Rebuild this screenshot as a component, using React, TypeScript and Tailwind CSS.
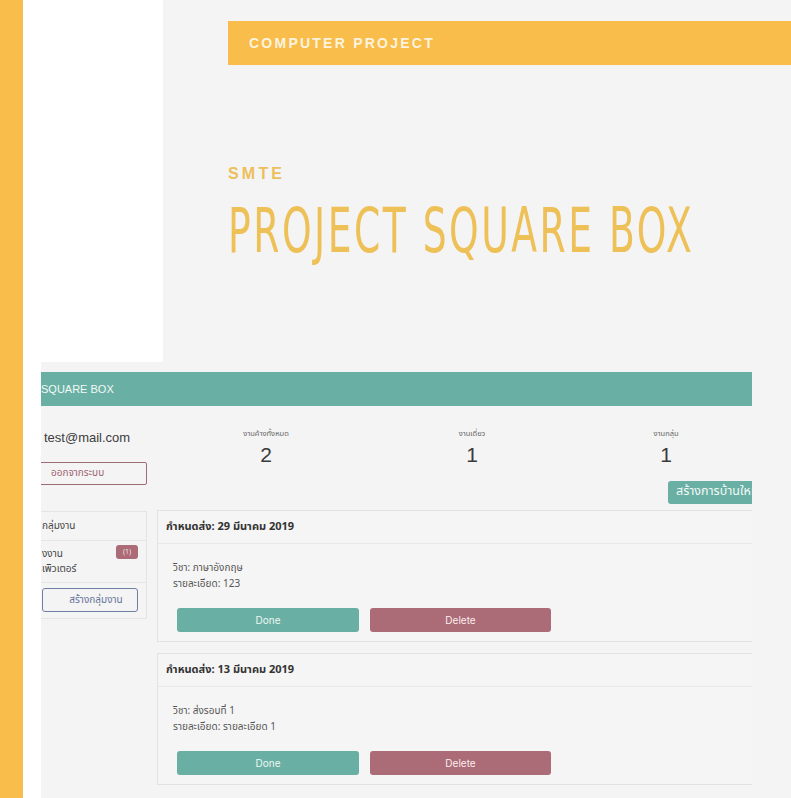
const thai = "font-['Noto_Sans_Thai','Noto_Sans','Liberation_Sans',sans-serif]";

function Card({ date, subject, detail }: { date: string; subject: string; detail: string }) {
  return (
    <div className="border border-[#e2e2e2] bg-[#f5f5f5]">
      <div className={`flex h-[33px] items-center border-b border-[#e8e8e8] pl-[8px] text-[11px] font-bold text-[#333] ${thai}`}>
        กำหนดส่ง: {date}
      </div>
      <div className="px-[15px] pt-[16px] pb-[9px]">
        <div className={`text-[10px] leading-[16px] text-[#555] ${thai}`}>
          <div>วิชา: {subject}</div>
          <div>รายละเอียด: {detail}</div>
        </div>
        <div className="mt-[16px] flex gap-[11px] pl-[4px]">
          <button className="h-[24px] w-[182px] rounded-[3px] bg-[#6aafa3] text-[10px] text-[#eef7f5] font-['Inter',sans-serif]">
            Done
          </button>
          <button className="h-[24px] w-[181px] rounded-[3px] bg-[#ab6b77] text-[10px] text-[#fbeef0] font-['Inter',sans-serif]">
            Delete
          </button>
        </div>
      </div>
    </div>
  );
}

function Stat({ label, value, w }: { label: string; value: string; w: string }) {
  return (
    <div className={`flex flex-col items-center ${w}`}>
      <div className={`text-[7.5px] leading-[10px] text-[#666] ${thai}`}>{label}</div>
      <div className="mt-[4px] text-[21px] leading-[24px] text-[#3a3a3a] font-['Liberation_Sans',sans-serif]">{value}</div>
    </div>
  );
}

export default function App() {
  return (
    <div className="flex h-[798px] w-[791px] overflow-hidden bg-white">
      <div className="w-[23px] shrink-0 bg-[#f8bd4b]" />
      <div className="flex min-w-0 flex-1 flex-col">
        <div className="flex h-[362px] shrink-0">
          <div className="w-[140px] shrink-0 bg-white" />
          <div className="flex-1 bg-[#f4f4f4] pt-[21px] pl-[65px]">
            <div className="flex h-[44px] items-center bg-[#f8bd4b] pl-[21px] text-[14px] font-bold tracking-[0.16em] text-[#fdf3df] font-['Liberation_Sans',sans-serif]">
              COMPUTER PROJECT
            </div>
            <div className="mt-[101px] text-[16px] font-bold leading-[16px] tracking-[0.2em] text-[#edbf5a] font-['Liberation_Sans',sans-serif]">
              SMTE
            </div>
            <div className="mt-[18px] origin-left scale-x-[0.675] whitespace-nowrap text-[62px] leading-[62px] tracking-[0.06em] text-[#eec058] font-['Liberation_Sans_Narrow','DejaVu_Sans_Condensed',sans-serif]">
              PROJECT SQUARE BOX
            </div>
          </div>
        </div>
        <div className="flex flex-1">
          <div className="w-[18px] shrink-0 bg-white" />
          <div className="flex min-w-0 flex-1 bg-[#f4f4f4] pt-[10px]">
            <div className="w-[711px] shrink-0 overflow-hidden">
              <div className="flex h-[34px] items-center bg-[#6aafa3] text-[11px] text-[#f2faf8] font-['Liberation_Sans',sans-serif]">
                <span>SQUARE BOX</span>
              </div>
              <div className="flex">
                <div className="w-[106px] shrink-0">
                  <div className="mt-[24px] pl-[3px] text-[13px] leading-[16px] text-[#3c3c3c] font-['Liberation_Sans',sans-serif]">
                    test@mail.com
                  </div>
                  <div className={`-ml-[12px] mt-[16px] flex h-[23px] items-center rounded-[2px] border border-[#9c6b74] pl-[21px] text-[10px] text-[#a0646f] ${thai}`}>
                    ออกจากระบบ
                  </div>
                  <div className="-ml-[12px] mt-[26px] border border-[#e4e4e4] pb-[6px]">
                    <div className={`flex h-[29px] items-center border-b border-[#e6e6e6] pl-[12px] text-[10px] text-[#444] ${thai}`}>
                      <span>กลุ่มงาน</span>
                    </div>
                    <div className={`flex h-[42px] items-start justify-between border-b border-[#e6e6e6] pt-[4px] pr-[8px] text-[10px] leading-[15px] text-[#444] ${thai}`}>
                      <div className="pl-[12px] pt-[2px]">
                        <div>งงาน</div>
                        <div>เพิวเตอร์</div>
                      </div>
                      <div className="flex h-[14px] w-[22px] items-center justify-center rounded-[3px] bg-[#ab6b77] text-[7px] text-[#f6e4e7]">
                        (1)
                      </div>
                    </div>
                    <div className={`ml-[12px] mr-[8px] mt-[5px] flex h-[24px] items-center justify-center rounded-[3px] border border-[#6f7fa3] pl-[12px] text-[10px] text-[#63739a] ${thai}`}>
                      สร้างกลุ่มงาน
                    </div>
                  </div>
                </div>
                <div className="ml-[10px] w-[612px] shrink-0">
                  <div className="mt-[23px] flex">
                    <Stat label="งานค้างทั้งหมด" value="2" w="w-[218px]" />
                    <Stat label="งานเดี่ยว" value="1" w="w-[194px]" />
                    <Stat label="งานกลุ่ม" value="1" w="w-[194px]" />
                  </div>
                  <div className="mt-[14px] flex justify-end">
                    <div className={`-mr-[12px] flex h-[23px] w-[113px] items-center rounded-[3px] bg-[#6aafa3] pl-[8px] text-[12.5px] text-[#f2faf8] whitespace-nowrap ${thai}`}>
                      สร้างการบ้านใหม่
                    </div>
                  </div>
                  <div className="mt-[6px] flex flex-col gap-[11px]">
                    <Card date="29 มีนาคม 2019" subject="ภาษาอังกฤษ" detail="123" />
                    <Card date="13 มีนาคม 2019" subject="ส่งรอบที่ 1" detail="รายละเอียด 1" />
                  </div>
                </div>
              </div>
            </div>
            <div className="flex-1" />
          </div>
        </div>
      </div>
    </div>
  );
}
